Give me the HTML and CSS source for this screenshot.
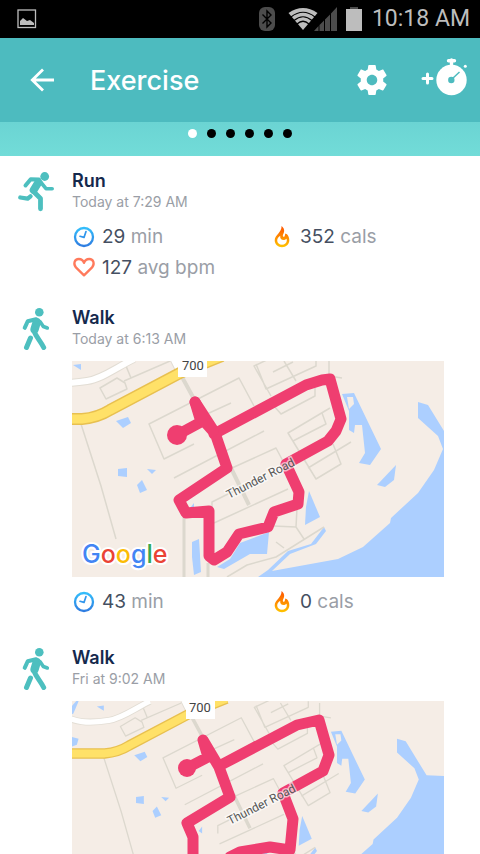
FILE: index.html
```html
<!DOCTYPE html>
<html lang="en">
<head>
<meta charset="UTF-8" />
<meta name="viewport" content="width=device-width, initial-scale=1" />
<title>Exercise</title>
<link rel="stylesheet" href="styles.css">
</head>
<body>
<!-- Shared icons and map tiles -->
<svg class="sprite" aria-hidden="true">
  <defs>
    <linearGradient id="blue" x1="0" y1="0" x2="0" y2="1">
      <stop offset="0" stop-color="#33bdfb" />
      <stop offset="1" stop-color="#2f7de1" />
    </linearGradient>
    <linearGradient id="fire" gradientUnits="userSpaceOnUse" x1="0" y1="0" x2="0" y2="22">
      <stop offset="0" stop-color="#ff4d00" />
      <stop offset="0.5" stop-color="#ff8500" />
      <stop offset="1" stop-color="#ffc400" />
    </linearGradient>
  </defs>
  <symbol id="clock" viewBox="0 0 24 24">
    <circle cx="12" cy="12" r="9" fill="none" stroke="url(#blue)" stroke-width="2.300" />
    <path d="M14 6.500L12 12.400L8 11.300" fill="none" stroke="#2f95ec" stroke-width="1.700" stroke-linecap="round" stroke-linejoin="round" />
  </symbol>
  <symbol id="heart" viewBox="0 0 24 24">
    <path d="M12 19.400L3.900 11.400C1 8 2.400 3 6.800 3C9.500 3 11.300 4.800 12 6.800C12.700 4.800 14.500 3 17.200 3C21.600 3 23 8 20.100 11.400Z" fill="none" stroke="#ff7a5c" stroke-width="2.300" stroke-linejoin="round" />
  </symbol>
  <symbol id="flame" viewBox="0 0 20 24">
    <path d="M9.600 1C13.300 4 12.300 7.300 11 9.700C10.300 11.500 11.800 12.500 12.600 11.300C13 10.500 13 9.600 13.300 8.600L15 9.300C16.500 11 17.300 13 17.300 15.300C17.300 19.300 14.100 22.200 10 22.200C5.900 22.200 2.700 19.300 2.700 15.300C2.700 10.300 9.800 7.300 9.600 1ZM8.200 10.800C6.500 11.900 5.200 13.300 5.200 15.500C5.200 18 7.300 19.800 10 19.800C12.700 19.800 14.800 18 14.800 15.500C14.800 14.700 14.700 14.300 14.500 13.700C12 16.300 7.500 15 8.200 10.800Z" fill="url(#fire)" fill-rule="evenodd" />
  </symbol>
  <symbol id="run" viewBox="0 0 36 42">
    <g fill="none" stroke="#4dbfbf" stroke-linecap="round" stroke-linejoin="round">
      <circle cx="26.700" cy="5.500" r="4.400" fill="#4dbfbf" stroke="none" />
      <path d="M7.500 14.500L12.700 8.200L21 8.500" stroke-width="4" />
      <path d="M20.300 11.500L15.700 19" stroke-width="8" />
      <path d="M23 11.500L28 17.700H34.200" stroke-width="3.600" />
      <path d="M15.500 20.500L22.500 27.500V37.800" stroke-width="4.800" />
      <path d="M12.500 25.300L9.700 27.700L2.300 26.500" stroke-width="4.300" />
    </g>
  </symbol>
  <symbol id="walk" viewBox="0 0 36 42">
    <g fill="none" stroke="#4dbfbf" stroke-linecap="round" stroke-linejoin="round">
      <circle cx="21.300" cy="4.300" r="4.300" fill="#4dbfbf" stroke="none" />
      <path d="M6.700 19.800L9.700 13.300L18 11.300" stroke-width="4" />
      <path d="M18.800 14L16.500 21.500" stroke-width="8.400" />
      <path d="M22.300 14L25.300 18.500L29.300 20" stroke-width="3.600" />
      <path d="M15.700 22.500C18 29 22 32 25.700 39.500" stroke-width="5" />
      <path d="M12.500 30L8.500 39.500" stroke-width="5" />
    </g>
  </symbol>
  <symbol id="terrain" viewBox="0 0 372 216" overflow="visible">
    <rect x="-40" y="-20" width="460" height="300" fill="#f5ede6" />
    <g fill="#accfff">
      <path d="M346 41L356 44L372 70L380 83L420 85V280H140L186 216L196 209L216 190L239 183L252 166L254 170L244 183L218 193L200 210L266 198L291 186L318 162L319 157L346 132L362 109L371 88L366 75L346 57Z" />
      <path d="M270 33L282 32L309 88L298 104L287 102L293 92L290 64L283 64L282 72L277 69V50Z" />
      <path d="M324 104L322 119L313 126L305 124Z" />
      <path d="M237 130L248 156L233 164L234 146Z" />
      <path d="M120 181L127 178L129 211L122 214L120 196Z" />
      <path d="M145 206L158 198L168 182L197 171L195 193L178 193L152 208Z" />
      <path d="M118 147L122 142V150Z" />
      <path d="M44 60L56 56L59 62L51 67Z" />
      <path d="M46 108L55 107V116L46 115Z" />
      <path d="M75 108L84 109L80 113Z" />
      <path d="M65 124L70 119L75 129L68 132Z" />
      <path d="M1 4L9 3V9Z" />
      <path d="M-28 39L-20 41L-22 48L-28 50Z" />
      <path d="M-30 6L-22 -3L-20 -2L-26 12L-30 14Z" />
    </g>
    <path d="M275 36H281L282 43L277 48Z" fill="#f5ede6" />
    <g fill="none" stroke="#dcd8ce" stroke-width="1.500" stroke-linejoin="round">
      <path d="M52 20L98 0M54 5L59 17M28 27L45 17L53 22L55 28L34 38Z" />
      <path d="M122 83L92 98L77 63L167 17L182 45M102 117L192 70M135 53L159 42M160 107L204 87L212 102" />
      <path d="M199 -3L182 5L199 35M184 3L194 28L244 5V-2M212 0L224 20M201 11L221 1M257 0V15L270 17M202 45L209 53L243 35V27" />
      <path d="M258 47L216 72L244 118L269 103L261 83M221 80L254 63L250 52M236 107L279 81" />
      <path d="M9 63L29 125L44 178M142 162L216 128M140 150V141L158 132L190 118" />
      <path d="M155 216L175 204L204 196L252 166M201 165L224 166L232 178M224 166L225 147M204 181L212 187" />
      <path d="M112 155V216M136 202V216" stroke-width="3" />
      <path d="M110 16L122 38M158 105L177 144" stroke-width="4" />
    </g>
    <path d="M-40 13C-25 22 -10 24 15 20C30 18 45 6 62 -2M101 -3L108 11" fill="none" stroke="#e2ddd4" stroke-width="8" />
    <path d="M-40 13C-25 22 -10 24 15 20C30 18 45 6 62 -2M101 -3L108 11" fill="none" stroke="#fff" stroke-width="6" />
    <path d="M-40 58H10C22 57 30 54 38 49L108 12L150 -5" fill="none" stroke="#e8c050" stroke-width="12" />
    <path d="M-40 58H10C22 57 30 54 38 49L108 12L150 -5" fill="none" stroke="#ffe168" stroke-width="9" />
  </symbol>
</svg>

<div class="status-bar">
  <svg class="picture-icon" width="20" height="20" viewBox="0 0 20 20">
    <rect x="1" y="1" width="17.500" height="17.500" fill="none" stroke="#bdbdbd" stroke-width="1.300" />
    <path d="M3 16V12L6 9L10 12L13 11L17 14V16Z" fill="#bdbdbd" />
  </svg>
  <svg class="bluetooth-icon" width="16" height="24" viewBox="0 0 16 24">
    <rect width="16" height="24" rx="6" fill="#4c4c4c" />
    <path d="M3.500 7.500L12 16L8 20V4L12 8L3.500 16.500" fill="none" stroke="#000" stroke-width="1.400" />
  </svg>
  <svg class="wifi-icon" width="30" height="24" viewBox="0 0 30 24">
    <path d="M15 23L.5 6Q15 -4 29.500 6Z" fill="#bdbdbd" />
    <path d="M3 10Q15 .5 27 10M6 13.500Q15 6 24 13.500M9 17Q15 11.500 21 17" fill="none" stroke="#000" stroke-width="1.200" />
  </svg>
  <svg class="signal-icon" width="23" height="24" viewBox="0 0 23 24">
    <path d="M0 24L4.500 19V24ZM5.500 18L10 13.500V24H5.500ZM11 12.500L16 7.500V24H11ZM17 6.500L23 0V24H17Z" fill="#4c4c4c" />
  </svg>
  <svg class="battery-icon" width="16" height="24" viewBox="0 0 16 24">
    <path d="M4 0H12V2H4Z" fill="#4c4c4c" />
    <path d="M0 2H16V24H0Z" fill="#bdbdbd" />
  </svg>
  <span class="time">10:18 AM</span>
</div>

<header class="app-bar">
  <button class="icon-btn" aria-label="Back">
    <svg width="24" height="24" viewBox="0 0 24 24" fill="none" stroke="#fff" stroke-width="2.800">
      <path d="M24 12H2M13 1.500L2.300 12L13 22.500" />
    </svg>
  </button>
  <h1>Exercise</h1>
  <button class="icon-btn" aria-label="Settings">
    <svg width="36" height="36" viewBox="0 0 24 24" fill="#fff">
      <path d="M19.430 12.980c.04-.32.07-.64.07-.98s-.03-.66-.07-.98l2.110-1.650c.19-.15.24-.42.12-.64l-2-3.460c-.12-.22-.39-.3-.61-.22l-2.490 1c-.52-.4-1.080-.73-1.690-.98l-.38-2.650C14.460 2.180 14.250 2 14 2h-4c-.25 0-.46.18-.49.42l-.38 2.650c-.61.25-1.170.59-1.690.98l-2.490-1c-.23-.09-.49 0-.61.22l-2 3.460c-.13.22-.07.49.12.64l2.110 1.650c-.04.32-.07.65-.07.98s.03.66.07.98l-2.110 1.650c-.19.15-.24.42-.12.64l2 3.460c.12.22.39.3.61.22l2.490-1c.52.4 1.080.73 1.690.98l.38 2.650c.03.24.24.42.49.42h4c.25 0 .46-.18.49-.42l.38-2.650c.61-.25 1.170-.59 1.690-.98l2.490 1c.23.09.49 0 .61-.22l2-3.460c.12-.22.07-.49-.12-.64l-2.110-1.650zM12 15.500c-1.930 0-3.500-1.570-3.500-3.500s1.570-3.500 3.500-3.500 3.500 1.570 3.500 3.500-1.570 3.500-3.500 3.500z" />
    </svg>
  </button>
  <button class="icon-btn" aria-label="Add exercise">
    <svg width="48" height="44" viewBox="0 0 48 44">
      <circle cx="31.500" cy="22" r="15.200" fill="#fff" />
      <path d="M28.500 2.700H34.500M31.500 2V8" fill="none" stroke="#fff" stroke-width="3.400" stroke-linecap="round" />
      <circle cx="31.300" cy="22" r="3.200" fill="#4dbbbf" />
      <path d="M32 21L39.500 14" stroke="#4dbbbf" stroke-width="1.500" />
      <circle cx="45.300" cy="8.200" r="1.500" fill="#fff" />
      <path d="M3 20.500H12M7.500 16V25" stroke="#fff" stroke-width="3" stroke-linecap="round" />
    </svg>
  </button>
</header>

<div class="pager">
  <span class="dot active"></span>
  <span class="dot"></span>
  <span class="dot"></span>
  <span class="dot"></span>
  <span class="dot"></span>
  <span class="dot"></span>
</div>

<main>
  <article class="entry">
    <svg class="entry-icon"><use href="#run" /></svg>
    <div class="entry-body">
      <h2>Run</h2>
      <p class="date">Today at 7:29 AM</p>
      <div class="stats">
        <div class="stat"><svg class="stat-icon"><use href="#clock" /></svg><span><b>29</b> min</span></div>
        <div class="stat"><svg class="stat-icon flame"><use href="#flame" /></svg><span><b>352</b> cals</span></div>
        <div class="stat"><svg class="stat-icon"><use href="#heart" /></svg><span><b>127</b> avg bpm</span></div>
      </div>
    </div>
  </article>

  <article class="entry has-map">
    <svg class="entry-icon"><use href="#walk" /></svg>
    <div class="entry-body">
      <h2>Walk</h2>
      <p class="date">Today at 6:13 AM</p>
      <svg class="map" viewBox="0 0 372 216" preserveAspectRatio="xMidYMid slice">
        <use href="#terrain" width="372" height="216" />
        <g class="route">
          <path d="M105 74L129 61L123 41L143 72L155 107L107 139L114 152L137 150V195L142 199L155 191L167 173L196 166L202 151L226 143L227 131L214 103L256 80L264 70L269 58L258 18L250 19L234 24L142 73" />
          <path d="M123 41L132 60L141 70" />
          <circle cx="105" cy="74" r="10" />
        </g>
        <rect x="106" y="-4" width="29" height="20" fill="#fff" />
        <text x="110" y="9" class="road-number">700</text>
        <text transform="translate(157 138) rotate(-27)" class="road-name">Thunder Road</text>
        <text x="10" y="202" class="google"><tspan fill="#4285f4">G</tspan><tspan fill="#ea4335">o</tspan><tspan fill="#fbbc05">o</tspan><tspan fill="#4285f4">g</tspan><tspan fill="#34a853">l</tspan><tspan fill="#ea4335">e</tspan></text>
      </svg>
      <div class="stats">
        <div class="stat"><svg class="stat-icon"><use href="#clock" /></svg><span><b>43</b> min</span></div>
        <div class="stat"><svg class="stat-icon flame"><use href="#flame" /></svg><span><b>0</b> cals</span></div>
      </div>
    </div>
  </article>

  <article class="entry has-map">
    <svg class="entry-icon"><use href="#walk" /></svg>
    <div class="entry-body">
      <h2>Walk</h2>
      <p class="date">Fri at 9:02 AM</p>
      <svg class="map" viewBox="0 0 372 216" preserveAspectRatio="xMidYMid slice">
        <g transform="translate(24 2) scale(.87)"><use href="#terrain" width="372" height="216" /></g>
        <g class="route">
          <path d="M115 67L136 56L131 39L147 66L158 96L115 122L121 136V190L140 176L158 156L168 151L198 146L218 149L221 118L211 92L251 70L257 54L247 19L225 24L147 65" />
          <circle cx="115" cy="67" r="9" />
        </g>
        <rect x="114" y="-2" width="29" height="20" fill="#fff" />
        <text x="117" y="11" class="road-number">700</text>
        <text transform="translate(158 124) rotate(-27)" class="road-name">Thunder Road</text>
      </svg>
    </div>
  </article>
</main>
</body>
</html>
```
FILE: styles.css
```css
:root {
  --teal: #4dbbbf;
  --title: #14294d;
  --value: #454f61;
  --muted: #9a9ea6;
}
* { box-sizing: border-box; }
html { scrollbar-width: none; }
body {
  margin: 0;
  background: #fff;
  color: var(--muted);
  font-family: Inter, sans-serif;
}
.sprite {
  position: absolute;
  width: 0;
  height: 0;
}
.status-bar {
  display: flex;
  align-items: center;
  height: 38px;
  padding: 0 10px 0 17px;
  background: #000;
}
.picture-icon { margin-right: auto; }
.wifi-icon { margin-left: 13px; }
.signal-icon { margin-left: -4px; }
.battery-icon { margin: 0 10px 0 9px; }
.time {
  color: #bdbdbd;
  font-family: Roboto, sans-serif;
  font-size: 23px;
  line-height: 38px;
}
.app-bar {
  display: flex;
  align-items: center;
  height: 84px;
  padding: 0 12px 0 30px;
  background: var(--teal);
}
.app-bar h1 {
  flex: 1;
  margin: 0 0 0 36px;
  color: #fff;
  font-size: 27px;
  font-weight: 500;
}
.icon-btn {
  display: flex;
  padding: 0;
  border: none;
  background: none;
  cursor: pointer;
}
.icon-btn + .icon-btn { margin-left: 30px; }
.pager {
  display: flex;
  justify-content: center;
  gap: 10px;
  height: 34px;
  padding-top: 7px;
  background: linear-gradient(#6bd4d3, #72dcd8);
}
.dot {
  width: 9px;
  height: 9px;
  border-radius: 50%;
  background: #000;
}
.dot.active { background: #fff; }
.entry {
  display: flex;
  gap: 18px;
  padding: 12px 8px 10px 18px;
}
.entry.has-map { padding-bottom: 16px; }
.entry-icon {
  flex: none;
  width: 36px;
  height: 42px;
  margin-top: 3px;
}
.entry-body {
  flex: 1;
  min-width: 0;
}
.entry h2 {
  margin: 0;
  color: var(--title);
  font-size: 18px;
  font-weight: 600;
  line-height: 26px;
}
.date {
  margin: 0;
  font-size: 14px;
  line-height: 16px;
}
.stats {
  display: grid;
  grid-template-columns: 1fr 1fr;
  margin-top: 11px;
}
.stat {
  display: flex;
  align-items: center;
  gap: 6px;
  height: 31px;
  font-size: 19px;
}
.stat b {
  color: var(--value);
  font-weight: 400;
}
.stat-icon {
  width: 24px;
  height: 24px;
}
.stat-icon.flame {
  width: 20px;
  margin-right: 2px;
}
.map {
  display: block;
  width: calc(100% - 28px);
  margin-top: 14px;
  aspect-ratio: 372 / 216;
}
.map + .stats { margin-top: 9px; }
.route {
  fill: none;
  stroke: #ef3e70;
  stroke-width: 11;
  stroke-linejoin: round;
  stroke-linecap: round;
}
.route circle {
  fill: #ef3e70;
  stroke: none;
}
.road-number {
  fill: #444;
  font-family: Roboto, sans-serif;
  font-size: 13px;
}
.road-name {
  fill: #555;
  font-family: Roboto, sans-serif;
  font-size: 12px;
  stroke: rgba(255, 255, 255, 0.6);
  stroke-width: 3;
  paint-order: stroke;
}
.google {
  font-size: 25px;
  font-weight: 500;
  stroke: #fff;
  stroke-width: 4;
  stroke-linejoin: round;
  paint-order: stroke;
}
```
